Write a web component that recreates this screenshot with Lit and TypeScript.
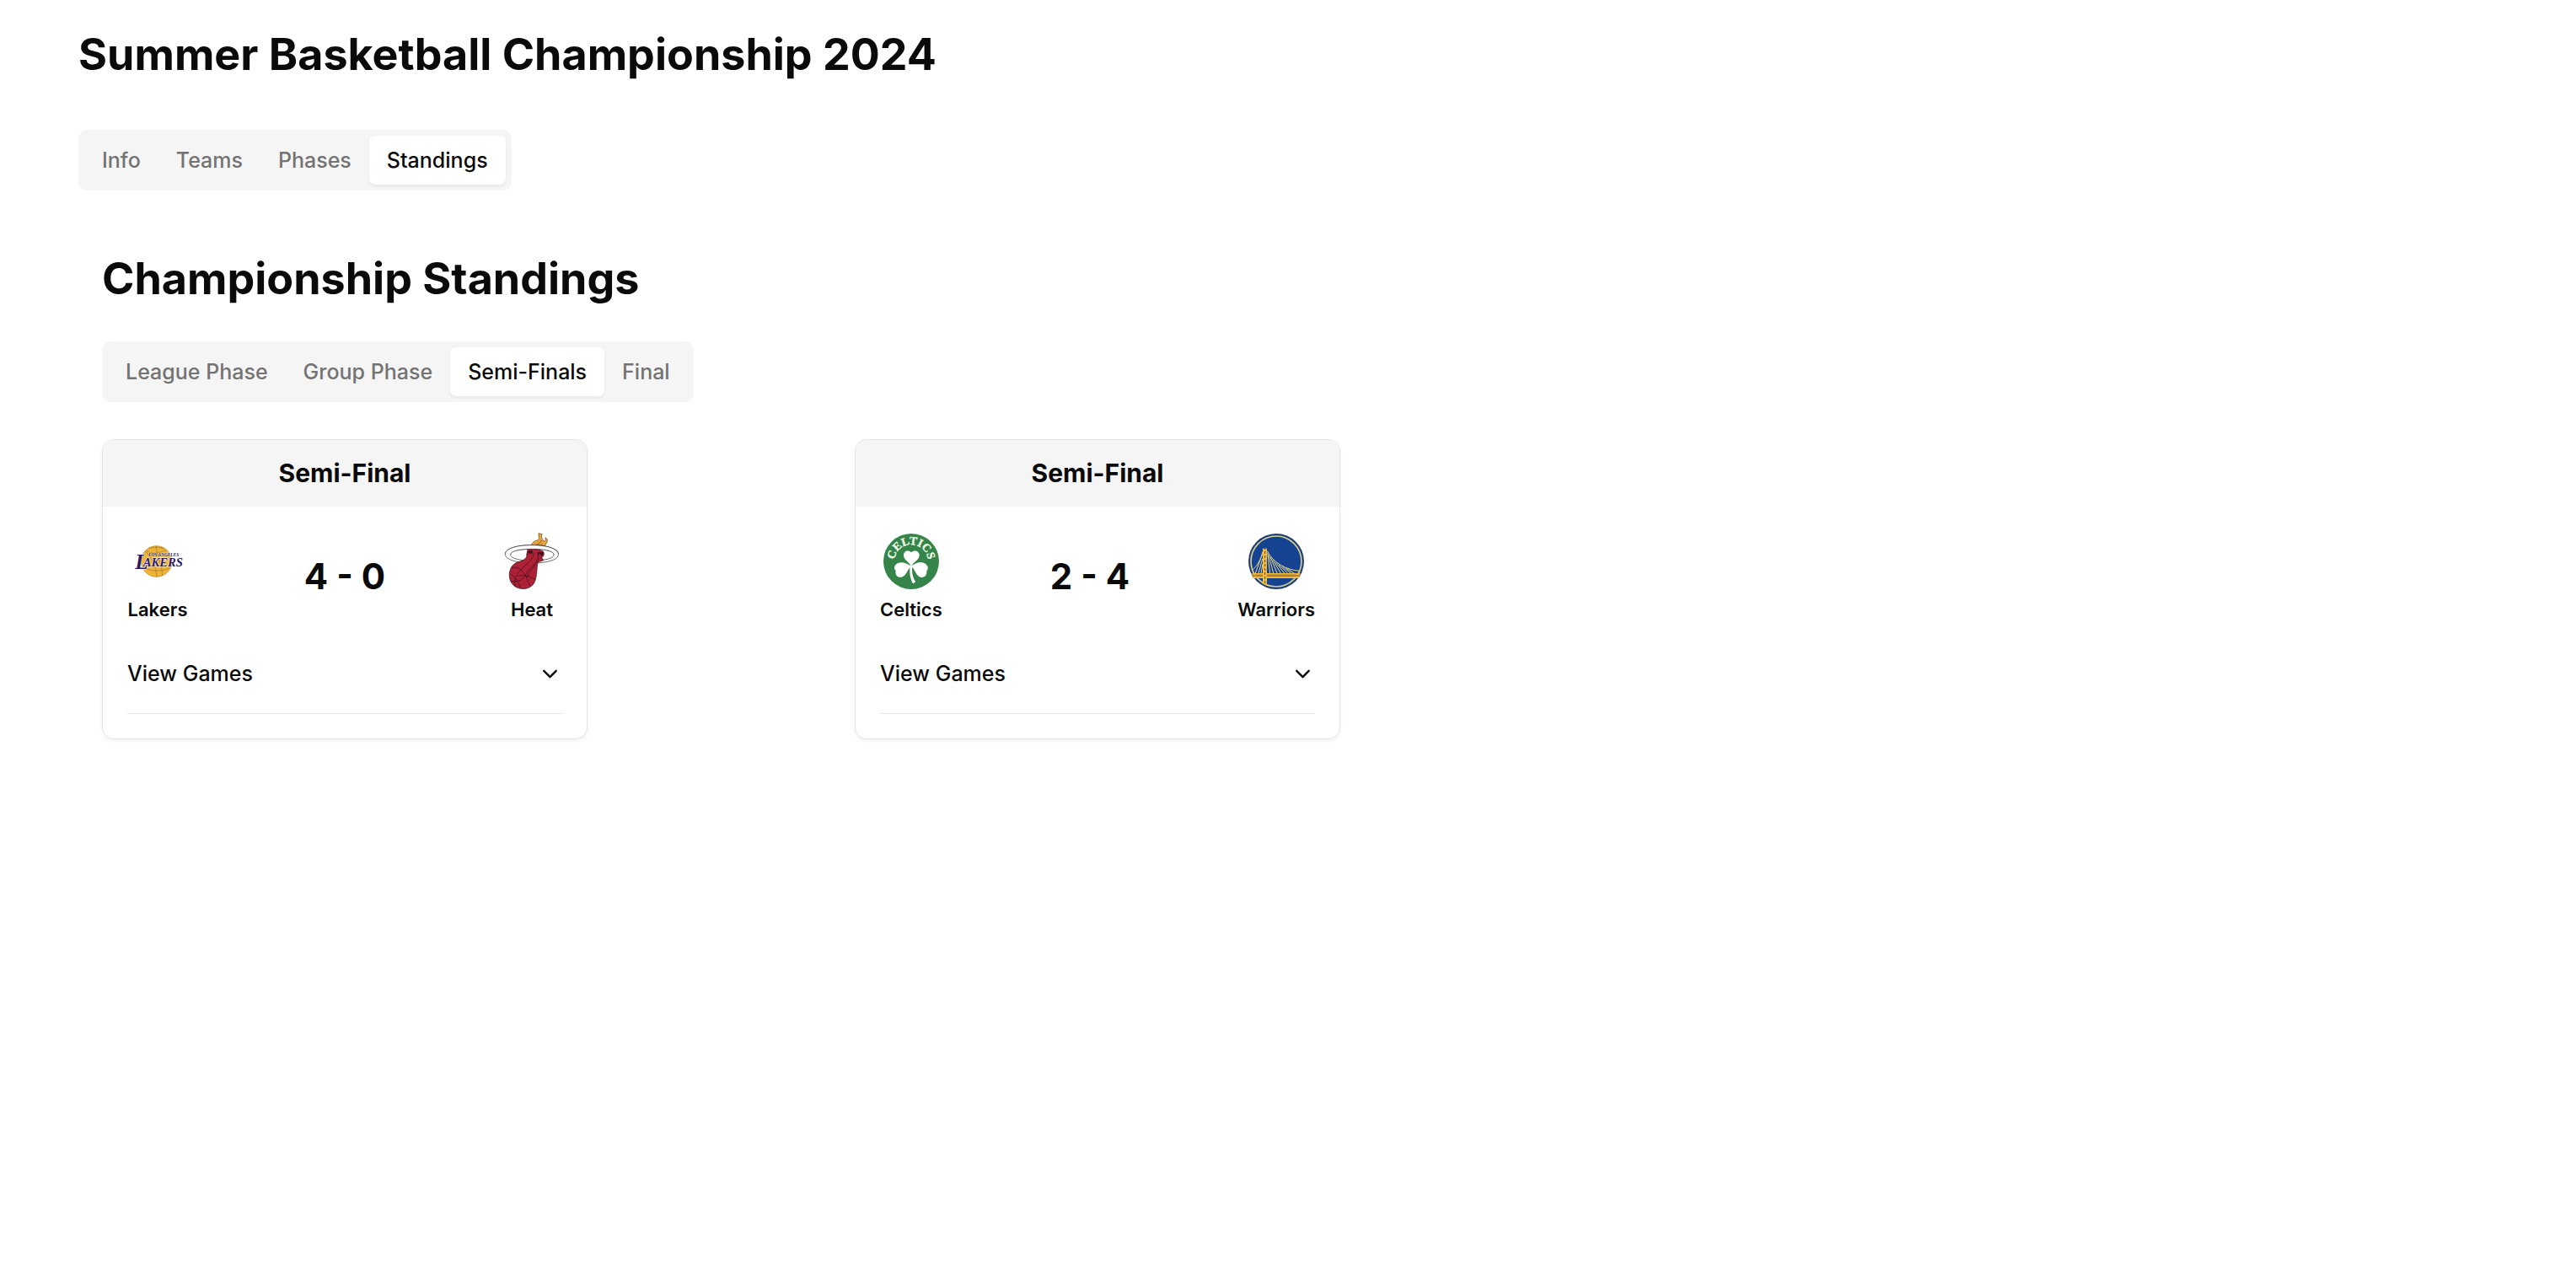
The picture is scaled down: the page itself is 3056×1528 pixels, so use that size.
import { LitElement, html, css, svg } from "lit";
import { customElement, property, state } from "lit/decorators.js";

type Team = "Lakers" | "Heat" | "Celtics" | "Warriors";

interface Series {
  home: Team;
  away: Team;
  homeWins: number;
  awayWins: number;
}

const lakers = html`<svg class="logo" viewBox="18 15 216 216" aria-hidden="true">
  <circle cx="122" cy="123" r="55" fill="#f0b434" stroke="#b98a2e" stroke-width="2" />
  <g fill="none" stroke="#9b7431" stroke-width="2">
    <path d="M84 84C96 92 106 95 122 93S150 86 159 82" />
    <path d="M82 88C106 104 120 144 123 178" />
    <path d="M121 69C118 90 146 140 142 174" />
    <path d="M70 142C92 158 146 164 174 142" />
    <path d="M96 76C108 72 134 71 148 77" stroke-dasharray="4 3" stroke-width="4" />
  </g>
  <g font-family="Liberation Serif, serif" font-style="italic" font-weight="700" fill="#2c1768" stroke="#fff" paint-order="stroke">
    <text x="94" y="105" font-size="16" stroke-width="1">LOS ANGELES</text>
    <text x="46" y="149" font-size="76" stroke-width="3">L</text>
    <text x="74" y="142" font-size="44" stroke-width="3">AKERS</text>
  </g>
</svg>`;

const heat = html`<svg class="logo" viewBox="15 15 216 216" aria-hidden="true">
  <path d="M121 72C120 57 130 51 145 47C153 41 145 33 147 23L160 26C154 35 159 43 165 51C173 51 172 43 171 38C181 43 179 53 174 59C170 68 164 75 155 80L124 80Z" fill="#e8a33a" stroke="#5a3b1c" stroke-width="2" />
  <path d="M133 73C137 61 151 64 157 48M150 75L160 60" fill="none" stroke="#5a3b1c" stroke-width="2" />
  <path fill-rule="evenodd" d="M28 97C28 77 70 65 122 65S217 77 217 98S174 129 122 129S28 117 28 97ZM47 99C47 113 80 120 124 120S201 113 201 99S168 79 124 79S47 86 47 99Z" fill="#fff" stroke="#29262b" stroke-width="2" />
  <path d="M108 81C122 77 146 78 162 87C169 94 166 106 158 109L164 119L145 126C139 146 143 174 132 198C122 218 96 226 72 217C49 208 39 184 44 159C49 139 60 129 78 124C96 119 107 110 104 100Z" fill="#ad2036" stroke="#321019" stroke-width="2" />
  <path d="M106 93C112 82 121 82 127 86L123 97ZM143 90L166 89L158 107L151 95L144 105Z" fill="#421420" />
  <g fill="none" stroke="#39111c" stroke-width="2">
    <path d="M129 92C134 119 96 132 68 173C61 186 59 202 67 214" />
    <path d="M145 96C151 125 115 144 103 166C92 187 80 198 47 193" />
    <path d="M45 168C62 176 75 190 82 219" />
    <path d="M51 145C77 140 96 155 115 209" />
    <path d="M70 176C92 169 113 175 135 187" />
    <path d="M153 108C144 115 132 145 116 158L105 182" />
  </g>
  <path d="M28 97C29 77 71 65 122 65S215 77 217 98L201 98C197 86 165 79 124 79S50 87 47 99Z" fill="#fff" />
  <path d="M28 97C28 77 70 65 122 65S217 77 217 98M47 99C47 86 80 79 124 79S201 86 201 99" fill="none" stroke="#29262b" stroke-width="2" />
</svg>`;

const celtics = html`<svg class="logo" viewBox="15 15 216 216" aria-hidden="true">
  <circle cx="123" cy="123" r="99" fill="#358449" />
  <path id="celtics-arc" d="M63 123A60 60 0 0 1 183 123" fill="none" />
  <text font-family="Liberation Serif, serif" font-size="41" fill="#f2fbea" stroke="#f2fbea" stroke-width="1" text-anchor="middle">
    <textPath href="#celtics-arc" startOffset="50%">CELTICS</textPath>
  </text>
  <g fill="#fff">
    <path d="M121 139C116 123 96 119 96 101C96 86 113 80 123 91C135 80 152 86 152 101C152 119 130 123 126 139Z" />
    <path d="M119 137C104 129 90 123 76 129C63 134 59 148 68 156C64 172 77 184 91 178C107 173 108 154 122 141Z" />
    <path d="M127 137C142 127 155 122 169 129C183 135 186 149 178 157C180 173 169 183 155 179C140 174 138 154 124 141Z" />
    <path d="M119 138L127 138C124 162 129 183 139 196L129 202C119 184 116 162 119 138Z" />
  </g>
</svg>`;

/* Suspension cables: [top x, top y, foot x] of each line from the main cable to the deck. */
const cables = [
  [104, 92, 113], [108, 99, 125], [115, 108, 138], [123, 118, 151],
  [133, 127, 164], [144, 135, 176], [157, 142, 188], [171, 148, 199],
];

const warriors = html`<svg class="logo" viewBox="27 15 216 216" aria-hidden="true">
  <circle cx="135" cy="123" r="99" fill="#1d3c74" />
  <circle cx="135" cy="123" r="90" fill="#164391" stroke="#d9cf92" stroke-width="5" />
  <g fill="none" stroke="#e6d58b" stroke-width="3">
    <path d="M103 86C123 127 171 154 219 157" />
    <path d="M87 88C80 119 67 139 50 154" />
    ${cables.map(([x, y, foot]) => svg`<path d=${`M${x} ${y}L${foot} 165`} />`)}
    <path d="M85 99L61 165M86 114L72 165M87 132L81 165" />
  </g>
  <path d="M49 165H220V170H49ZM51 177H216V183H51Z" fill="#f4b936" />
  <path d="M49 171H220V176H49Z" fill="#b78a43" />
  <path d="M87 80L90 74L93 80H96L99 74L102 80V209L87 203Z" fill="#f4b936" />
  <path d="M95 87V204" fill="none" stroke="#594b48" stroke-width="3" stroke-dasharray="9 6" />
</svg>`;

const logos = { Lakers: lakers, Heat: heat, Celtics: celtics, Warriors: warriors };

@customElement("tab-bar")
export class TabBar extends LitElement {
  @property({ attribute: false }) tabs: string[] = [];
  @property() active = "";
  @property() label = "";

  static styles = css`
    :host {
      display: block;
    }
    .bar {
      display: inline-flex;
      vertical-align: top;
      padding: 7px;
      border-radius: 11px;
      background: #f5f5f5;
    }
    .tab {
      padding: 11px 21px;
      border: 0;
      border-radius: 7px;
      background: none;
      color: #737373;
      font: 500 25px/36px Inter, "Liberation Sans", sans-serif;
      white-space: nowrap;
      cursor: pointer;
    }
    .tab.active {
      background: #fff;
      color: #0a0a0a;
      box-shadow: 0 2px 4px rgb(0 0 0 / 6%);
    }
  `;

  render() {
    return html`<div class="bar" role="tablist" aria-label=${this.label}>
      ${this.tabs.map(
        (tab) => html`<button
          class="tab ${tab === this.active ? "active" : ""}"
          role="tab"
          aria-selected=${tab === this.active}
          @click=${() => (this.active = tab)}
        >${tab}</button>`
      )}
    </div>`;
  }
}

@customElement("series-card")
export class SeriesCard extends LitElement {
  @property({ attribute: false }) series!: Series;
  @state() private open = false;

  static styles = css`
    :host {
      display: block;
      max-width: 576px;
    }
    .card {
      box-sizing: border-box;
      overflow: hidden;
      border: 1px solid #e5e5e5;
      border-radius: 14px;
      background: #fff;
      box-shadow: 0 2px 4px rgb(0 0 0 / 6%);
    }
    .heading {
      margin: 0;
      padding: 22px 29px;
      background: #f5f5f5;
      font-size: 30px;
      line-height: 35px;
      font-weight: 700;
      text-align: center;
    }
    .body {
      padding: 29px;
    }
    .match {
      display: flex;
      align-items: center;
      justify-content: space-between;
    }
    .team {
      display: flex;
      flex-direction: column;
      align-items: center;
      gap: 7px;
      font-size: 22px;
      line-height: 29px;
      font-weight: 600;
    }
    .logo {
      display: block;
      width: 72px;
      height: 72px;
    }
    .score {
      font-size: 42px;
      line-height: 58px;
      font-weight: 700;
    }
    .toggle {
      display: flex;
      align-items: center;
      justify-content: space-between;
      width: 100%;
      margin-top: 14px;
      padding: 29px 0;
      border: 0;
      border-bottom: 1px solid #e5e5e5;
      background: none;
      color: inherit;
      font: 500 25px/36px Inter, "Liberation Sans", sans-serif;
      cursor: pointer;
    }
    .chevron {
      width: 29px;
      height: 29px;
    }
    .chevron.open {
      transform: rotate(180deg);
    }
  `;

  private team(name: Team) {
    return html`<div class="team">${logos[name]}<span>${name}</span></div>`;
  }

  render() {
    const { home, away, homeWins, awayWins } = this.series;
    return html`<article class="card">
      <h3 class="heading">Semi-Final</h3>
      <div class="body">
        <div class="match">
          ${this.team(home)}
          <div class="score">${homeWins} - ${awayWins}</div>
          ${this.team(away)}
        </div>
        <button class="toggle" aria-expanded=${this.open} @click=${() => (this.open = !this.open)}>
          <span>View Games</span>
          <svg class="chevron ${this.open ? "open" : ""}" viewBox="0 0 24 24" fill="none" stroke="currentColor" stroke-width="2" stroke-linecap="round" stroke-linejoin="round" aria-hidden="true">
            <path d="m6 9 6 6 6-6" />
          </svg>
        </button>
      </div>
    </article>`;
  }
}

@customElement("app-root")
export class AppRoot extends LitElement {
  private series: Series[] = [
    { home: "Lakers", away: "Heat", homeWins: 4, awayWins: 0 },
    { home: "Celtics", away: "Warriors", homeWins: 2, awayWins: 4 },
  ];

  static styles = css`
    :host {
      display: block;
      min-height: 100vh;
      background: #fff;
      color: #0a0a0a;
      font-family: Inter, "Liberation Sans", sans-serif;
    }
    .page {
      padding: 33px 93px;
    }
    .title {
      margin: 0;
      font-size: 52px;
      line-height: 64px;
      font-weight: 700;
    }
    .sections {
      margin-top: 57px;
    }
    .standings {
      max-width: 2650px;
      padding: 73px 28px 0;
    }
    .phases {
      margin-top: 42px;
    }
    .grid {
      display: grid;
      grid-template-columns: repeat(3, minmax(0, 1fr));
      gap: 29px;
      margin-top: 44px;
    }
  `;

  render() {
    return html`<main class="page">
      <h1 class="title">Summer Basketball Championship 2024</h1>
      <tab-bar class="sections" label="Championship" .tabs=${["Info", "Teams", "Phases", "Standings"]} active="Standings"></tab-bar>
      <section class="standings">
        <h2 class="title">Championship Standings</h2>
        <tab-bar class="phases" label="Phase" .tabs=${["League Phase", "Group Phase", "Semi-Finals", "Final"]} active="Semi-Finals"></tab-bar>
        <div class="grid">
          ${this.series.map((s) => html`<series-card .series=${s}></series-card>`)}
        </div>
      </section>
    </main>`;
  }
}
